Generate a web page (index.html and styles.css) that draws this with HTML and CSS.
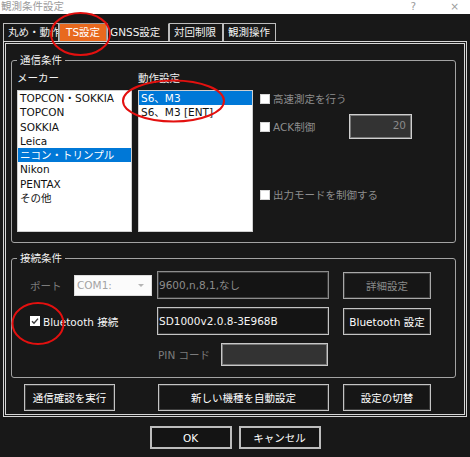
FILE: index.html
```html
<!DOCTYPE html>
<html lang="ja">
<head>
<meta charset="utf-8">
<title>観測条件設定</title>
<link rel="stylesheet" href="styles.css">
</head>
<body>
<div class="window">
  <div class="titlebar">
    <span class="title">観測条件設定</span>
    <span class="tb-btns"><span>?</span><span>×</span></span>
  </div>

  <div class="tabs">
    <div class="tab tab-1">丸め・動作</div>
    <div class="tab tab-2 active">TS設定</div>
    <div class="tab tab-3">GNSS設定</div>
    <div class="tab tab-4">対回制限</div>
    <div class="tab tab-5">観測操作</div>
  </div>

  <div class="tabpage">
    <fieldset class="group g1">
      <legend>通信条件</legend>
      <div class="g1-body">
        <div class="col">
          <div class="collabel">メーカー</div>
          <ul class="list">
            <li>TOPCON・SOKKIA</li>
            <li>TOPCON</li>
            <li>SOKKIA</li>
            <li>Leica</li>
            <li class="sel">ニコン・トリンプル</li>
            <li>Nikon</li>
            <li>PENTAX</li>
            <li>その他</li>
          </ul>
        </div>
        <div class="col col-2">
          <div class="collabel">動作設定</div>
          <ul class="list">
            <li class="sel">S6、M3</li>
            <li>S6、M3 [ENT]</li>
          </ul>
        </div>
        <div class="opts">
          <div class="chk dim opt-1"><span class="box"></span>高速測定を行う</div>
          <div class="ackrow">
            <div class="chk dim ack"><span class="box"></span>ACK制御</div>
            <div class="numbox">20</div>
          </div>
          <div class="chk dim opt-3"><span class="box"></span>出力モードを制御する</div>
        </div>
      </div>
    </fieldset>

    <fieldset class="group g2">
      <legend>接続条件</legend>
      <div class="row row-1">
        <div class="lead">
          <span class="portlbl">ポート</span>
          <div class="combo"><span>COM1:</span><span class="arrow"></span></div>
        </div>
        <div class="tbox tbox-dim">9600,n,8,1,なし</div>
        <button class="btn btn-side btn-dim">詳細設定</button>
      </div>
      <div class="row row-2">
        <div class="lead">
          <div class="chk bt"><span class="box checked"><svg viewBox="0 0 10 10" width="10" height="10"><polyline points="2,5.2 4,7.3 8,2.6" fill="none" stroke="#3c3c3c" stroke-width="1.4"/></svg></span>Bluetooth 接続</div>
        </div>
        <div class="tbox">SD1000v2.0.8-3E968B</div>
        <button class="btn btn-side">Bluetooth 設定</button>
      </div>
      <div class="row row-3">
        <div class="lead"></div>
        <span class="pinlbl">PIN コード</span>
        <div class="pinbox"></div>
      </div>
    </fieldset>

    <div class="actions">
      <button class="btn act-1">通信確認を実行</button>
      <button class="btn act-2">新しい機種を自動設定</button>
      <button class="btn act-3">設定の切替</button>
    </div>
  </div>

  <div class="dlg-buttons">
    <button class="btn dlg">OK</button>
    <button class="btn dlg">キャンセル</button>
  </div>
</div>

<svg class="marks" width="470" height="457" viewBox="0 0 470 457">
  <ellipse cx="80.5" cy="34" rx="29.5" ry="21" />
  <ellipse cx="173.5" cy="101" rx="50.5" ry="20.5" />
  <ellipse cx="38" cy="323.5" rx="25.5" ry="20.5" />
</svg>
</body>
</html>
```

FILE: styles.css
```css
* { box-sizing: border-box; }

html, body { margin: 0; padding: 0; }

body {
  position: relative;
  width: 470px;
  height: 457px;
  overflow: hidden;
  background: #181818;
  font-family: "DejaVu Sans", "Noto Sans CJK JP", sans-serif;
  font-size: 10.5px;
  color: #f2f2f2;
}

/* title bar */
.titlebar {
  height: 14px;
  background: #ffffff;
  display: flex;
  justify-content: space-between;
  align-items: flex-start;
  color: #9c9c9c;
}
.title { line-height: 12px; padding-left: 1px; }
.tb-btns {
  display: flex;
  gap: 34px;
  line-height: 12px;
  padding-right: 11px;
}

/* tabs */
.tabs {
  display: flex;
  height: 18px;
  margin: 9px 0 0 3px;
}
.tab {
  height: 18px;
  border: 1px solid #bdbdbd;
  border-bottom: none;
  padding-left: 4px;
  line-height: 17px;
  white-space: nowrap;
  overflow: hidden;
  color: #f2f2f2;
}
.tab-1 { width: 56px; }
.tab-2 { width: 48px; padding-left: 6px; }
.tab-3 { width: 62px; padding-left: 2px; border-top-color: #181818; }
.tab-4 { width: 54px; }
.tab-5 { width: 53px; }
.tab.active {
  background: #e8691e;
  color: #ffffff;
  border-color: #9a9a9a;
}

/* tab page */
.tabpage {
  width: 464px;
  height: 376px;
  margin-left: 3px;
  border: 3px double #d6d6d6;
  padding: 9px 8px 0 5px;
}

.group {
  margin: 0;
  padding: 0;
  min-width: 0;
  border: 1px solid #a3a3a3;
  border-radius: 3px;
}
.group legend {
  margin-left: 5px;
  padding: 0 3px;
  line-height: 14px;
  color: #f2f2f2;
}

/* communication group */
.g1-body {
  display: flex;
  padding: 4px 0 10px 5px;
}
.col { width: 115px; }
.col-2 { margin-left: 6px; }
.collabel {
  line-height: 14px;
  margin-bottom: 5px;
  color: #f2f2f2;
}
.list {
  list-style: none;
  margin: 0;
  padding: 0;
  height: 142px;
  background: #ffffff;
  border: 1px solid #cfcfcf;
  color: #111111;
}
.list li {
  height: 14.3px;
  line-height: 14.3px;
  padding-left: 2px;
  white-space: nowrap;
}
.list li.sel {
  background: #0078d7;
  color: #ffffff;
}

.opts {
  display: flex;
  flex-direction: column;
  margin-left: 7px;
}
.chk {
  display: flex;
  align-items: center;
  gap: 3px;
  height: 17px;
  white-space: nowrap;
}
.dim { color: #8e8e8e; }
.box {
  width: 10px;
  height: 10px;
  background: #ffffff;
  border: 1px solid #d4d4d4;
  flex: none;
  display: flex;
}
.box.checked { border: none; }
.opt-1 { margin-top: 19px; }
.ackrow {
  display: flex;
  align-items: center;
  height: 25px;
  margin-top: 7px;
}
.ack { width: 89px; }
.numbox {
  width: 63px;
  height: 25px;
  background: #333333;
  border: 1px solid #cfcfcf;
  box-shadow: inset 0 0 0 1px #777777;
  color: #8a8a8a;
  text-align: right;
  padding-right: 5px;
  line-height: 20px;
}
.opt-3 { margin-top: 47px; }

/* connection group */
.g2 { margin-top: 8px; }
.g2 legend { margin-bottom: 6px; }
.row {
  display: flex;
  align-items: center;
  height: 28px;
}
.row-2 { margin-top: 8px; }
.row-3 { margin-top: 7px; height: 25px; margin-bottom: 10px; }
.lead {
  width: 145px;
  flex: none;
  display: flex;
  align-items: center;
  padding-left: 18px;
}
.portlbl { width: 44px; color: #7c7c7c; }
.combo {
  width: 78px;
  height: 21px;
  background: #fbfbfb;
  border: 1px solid #dcdcdc;
  display: flex;
  align-items: center;
  justify-content: space-between;
  padding: 0 7px 0 2px;
  color: #a3a3a3;
}
.arrow {
  width: 0;
  height: 0;
  border-left: 3px solid transparent;
  border-right: 3px solid transparent;
  border-top: 3px solid #b5b5b5;
}
.tbox {
  width: 172px;
  height: 28px;
  border: 1px solid #c4c4c4;
  box-shadow: inset 0 0 0 1px #3a3a3a;
  background: #141414;
  padding-left: 1px;
  line-height: 26px;
  color: #f5f5f5;
  white-space: nowrap;
}
.tbox-dim {
  border-color: #8c8c8c;
  color: #8c8c8c;
}
.bt { color: #f5f5f5; }
.pinlbl {
  width: 64px;
  padding-left: 1px;
  color: #7c7c7c;
}
.pinbox {
  width: 107px;
  height: 23px;
  background: #333333;
  border: 1px solid #c8c8c8;
  box-shadow: inset 0 0 0 1px #777777;
}

/* buttons */
.btn {
  font: inherit;
  margin: 0;
  padding: 0;
  height: 27px;
  background: #161616;
  border: 1px solid #c4c4c4;
  box-shadow: inset 0 0 0 1px #3c3c3c;
  color: #ffffff;
  white-space: nowrap;
}
.btn-side { width: 88px; margin-left: 14px; }
.btn-dim { color: #8a8a8a; border-color: #a8a8a8; }

.actions {
  display: flex;
  margin: 6px 0 0 13px;
}
.act-1 { width: 91px; }
.act-2 { width: 171px; margin-left: 43px; }
.act-3 { width: 88px; margin-left: 14px; }

.dlg-buttons {
  display: flex;
  justify-content: center;
  gap: 7px;
  margin-top: 9px;
}
.dlg {
  width: 82px;
  height: 23px;
  border: 2px solid #bdbdbd;
  box-shadow: none;
  background: #141414;
}

/* red annotation marks drawn over the screenshot */
.marks {
  position: absolute;
  left: 0;
  top: 0;
  pointer-events: none;
}
.marks ellipse {
  fill: none;
  stroke: #e3100f;
  stroke-width: 2;
}
```
